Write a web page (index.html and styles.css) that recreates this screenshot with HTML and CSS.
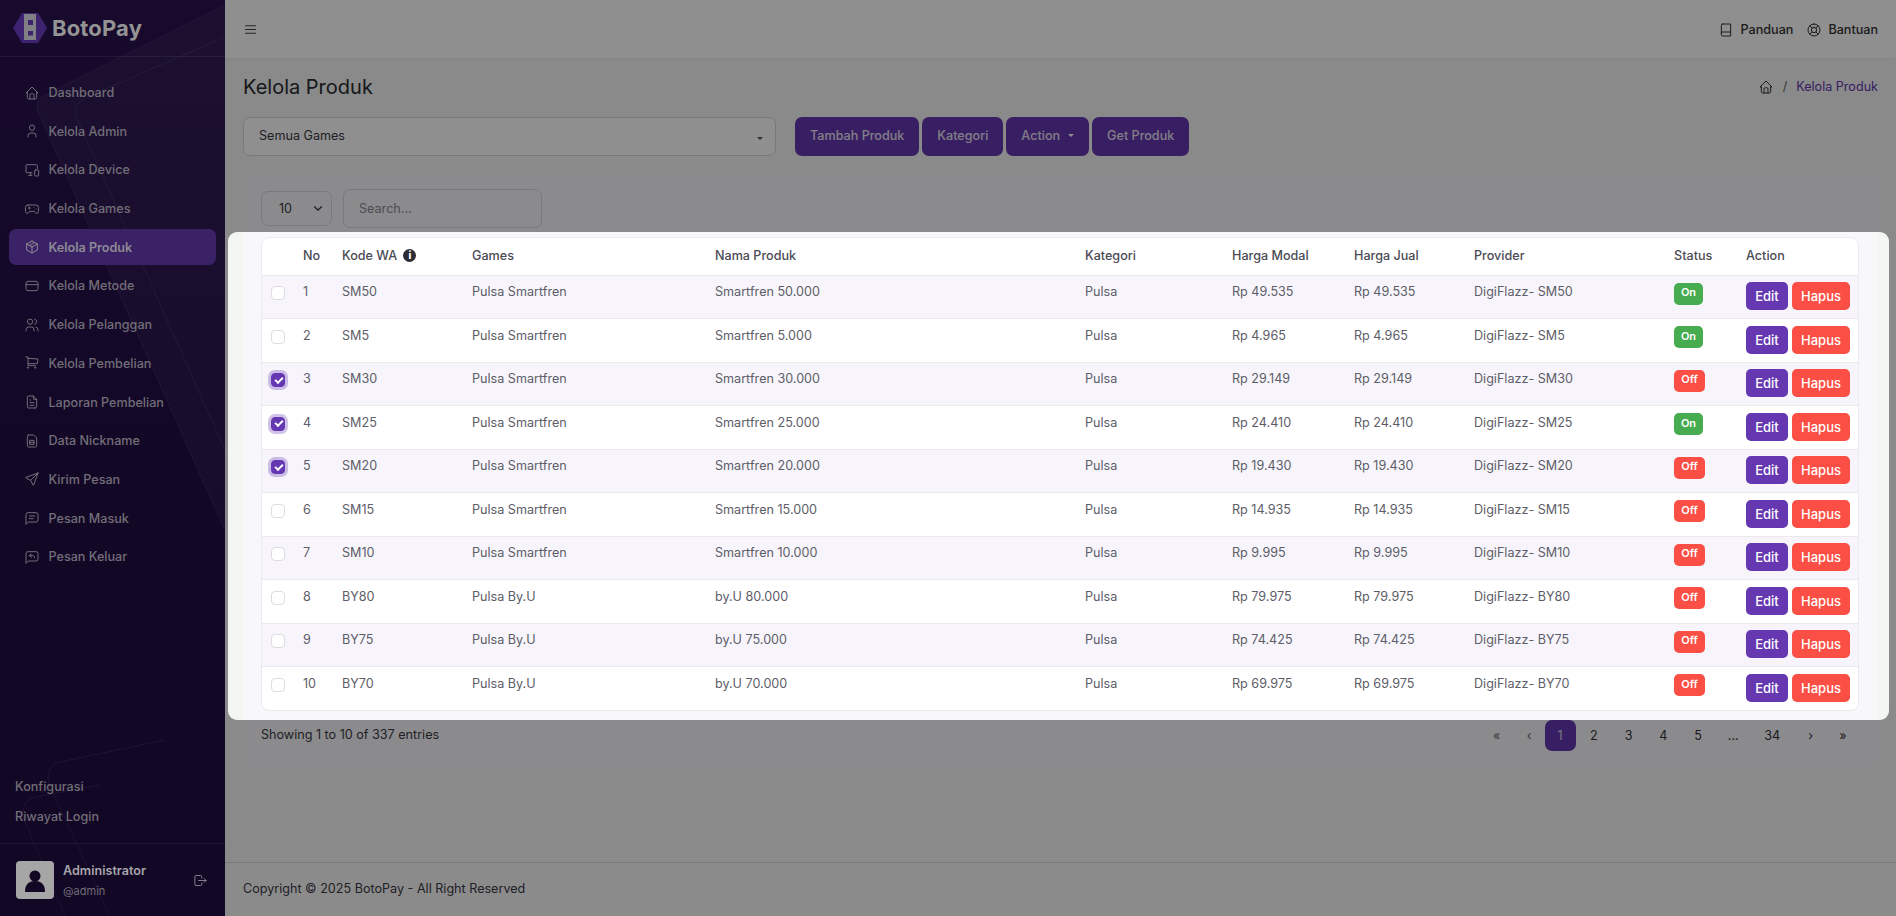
FILE: index.html
```html
<!DOCTYPE html>
<html lang="id">
<head>
<meta charset="utf-8">
<title>Kelola Produk - BotoPay</title>
<link rel="stylesheet" href="styles.css">
</head>
<body>
<svg class="sprite" aria-hidden="true">
<symbol id="i-home" viewBox="0 0 24 24"><path d="M5 12H3l9-9 9 9h-2M5 12v7a2 2 0 0 0 2 2h10a2 2 0 0 0 2-2v-7M9 21v-6a2 2 0 0 1 2-2h2a2 2 0 0 1 2 2v6"/></symbol>
<symbol id="i-user" viewBox="0 0 24 24"><path d="M8 7a4 4 0 1 0 8 0a4 4 0 0 0-8 0M6 21v-2a4 4 0 0 1 4-4h4a4 4 0 0 1 4 4v2"/></symbol>
<symbol id="i-device" viewBox="0 0 24 24"><path d="M12 16H4a1 1 0 0 1-1-1V5a1 1 0 0 1 1-1h15a1 1 0 0 1 1 1v5M7 20h5M10 16v4M17 12h4a1 1 0 0 1 1 1v7a1 1 0 0 1-1 1h-4a1 1 0 0 1-1-1v-7a1 1 0 0 1 1-1z"/></symbol>
<symbol id="i-game" viewBox="0 0 24 24"><path d="M6 6h12a4 4 0 0 1 4 4l-.5 6a2.5 2.5 0 0 1-4.500 1.500L15.500 15.500h-7L7 17.500A2.500 2.500 0 0 1 2.500 16L2 10a4 4 0 0 1 4-4zM8 9v3M6.500 10.500h3M15 10h.01M18 12h.01"/></symbol>
<symbol id="i-box" viewBox="0 0 24 24"><path d="M12 3l8 4.500v9L12 21l-8-4.500v-9L12 3M12 12l8-4.500M12 12v9M12 12L4 7.500M16 5.250l-8 4.500"/></symbol>
<symbol id="i-card" viewBox="0 0 24 24"><path d="M6 5h12a3 3 0 0 1 3 3v8a3 3 0 0 1-3 3H6a3 3 0 0 1-3-3V8a3 3 0 0 1 3-3zM3 10h18"/></symbol>
<symbol id="i-users" viewBox="0 0 24 24"><path d="M5 7a4 4 0 1 0 8 0a4 4 0 0 0-8 0M3 21v-2a4 4 0 0 1 4-4h4a4 4 0 0 1 4 4v2M16 3.130a4 4 0 0 1 0 7.750M21 21v-2a4 4 0 0 0-3-3.850"/></symbol>
<symbol id="i-cart" viewBox="0 0 24 24"><path d="M5 19a1 1 0 1 0 2 0a1 1 0 0 0-2 0M16 19a1 1 0 1 0 2 0a1 1 0 0 0-2 0M17 16H6V3H3M6 5l15 1-1 7H6"/></symbol>
<symbol id="i-file" viewBox="0 0 24 24"><path d="M14 3v4a1 1 0 0 0 1 1h4M17 21H7a2 2 0 0 1-2-2V5a2 2 0 0 1 2-2h7l5 5v11a2 2 0 0 1-2 2zM9 9h1M9 13h6M9 17h6"/></symbol>
<symbol id="i-sim" viewBox="0 0 24 24"><path d="M7 3h7.500L19 7.500V19a2 2 0 0 1-2 2H7a2 2 0 0 1-2-2V5a2 2 0 0 1 2-2zM9 11h6v6H9zM9 14h6"/></symbol>
<symbol id="i-send" viewBox="0 0 24 24"><path d="M10 14L21 3M21 3l-6.500 18a.55.55 0 0 1-1 0L10 14l-7-3.500a.55.55 0 0 1 0-1L21 3"/></symbol>
<symbol id="i-msg" viewBox="0 0 24 24"><path d="M8 9h8M8 13h6M3 21V7a3 3 0 0 1 3-3h12a3 3 0 0 1 3 3v8a3 3 0 0 1-3 3H7z"/></symbol>
<symbol id="i-reply" viewBox="0 0 24 24"><path d="M11 7.500L8 10l3 2.500M8 10h6a3 3 0 0 1 2 3M3 21V7a3 3 0 0 1 3-3h12a3 3 0 0 1 3 3v8a3 3 0 0 1-3 3H7z"/></symbol>
<symbol id="i-logout" viewBox="0 0 24 24"><path d="M14 8V6a2 2 0 0 0-2-2H5a2 2 0 0 0-2 2v12a2 2 0 0 0 2 2h7a2 2 0 0 0 2-2v-2M9 12h12l-3-3M18 15l3-3"/></symbol>
<symbol id="i-menu" viewBox="0 0 24 24"><path d="M4 6h16M4 12h16M4 18h16"/></symbol>
<symbol id="i-book" viewBox="0 0 24 24"><path d="M7 3h12v18H7a2 2 0 0 1-2-2V5a2 2 0 0 1 2-2zM5 17a2 2 0 0 1 2-2h12"/></symbol>
<symbol id="i-help" viewBox="0 0 24 24"><path d="M12 3a9 9 0 1 0 0 18a9 9 0 0 0 0-18zM12 8a4 4 0 1 0 0 8a4 4 0 0 0 0-8zM15 15l3.350 3.350M9 15l-3.350 3.350M5.650 5.650L9 9M18.350 5.650L15 9"/></symbol>
</svg>

<aside class="sidebar">
  <svg class="side-art" viewBox="0 0 225 916" preserveAspectRatio="none" aria-hidden="true">
    <path class="art-fill" d="M225 5L45 95Q34 101 38 112L225 530Z"/>
    <path class="art-line" d="M225 5L45 95Q34 101 38 112L225 530"/>
    <path class="art-line" d="M225 37L85 98Q74 104 76 116L225 450"/>
    <path class="art-line" d="M165 740L55 763Q44 772 50 786L110 916"/>
    <path class="art-line" d="M100 785L30 798Q20 806 24 820L65 916"/>
  </svg>
  <div class="brand">
    <svg class="brand-mark" viewBox="0 0 34 30" aria-hidden="true">
      <path class="hex" d="M9 0h16l9 15-9 15H9L0 15z"/>
      <rect class="hex-in" x="11" y="1" width="12" height="26"/>
      <rect class="hex" x="15" y="7" width="5" height="5"/>
      <rect class="hex" x="15" y="18" width="5" height="4.500"/>
    </svg>
    <span class="brand-name">BotoPay</span>
  </div>
  <nav class="menu">
    <a class="menu-item"><svg class="ico"><use href="#i-home"/></svg>Dashboard</a>
    <a class="menu-item"><svg class="ico"><use href="#i-user"/></svg>Kelola Admin</a>
    <a class="menu-item"><svg class="ico"><use href="#i-device"/></svg>Kelola Device</a>
    <a class="menu-item"><svg class="ico"><use href="#i-game"/></svg>Kelola Games</a>
    <a class="menu-item active"><svg class="ico"><use href="#i-box"/></svg>Kelola Produk</a>
    <a class="menu-item"><svg class="ico"><use href="#i-card"/></svg>Kelola Metode</a>
    <a class="menu-item"><svg class="ico"><use href="#i-users"/></svg>Kelola Pelanggan</a>
    <a class="menu-item"><svg class="ico"><use href="#i-cart"/></svg>Kelola Pembelian</a>
    <a class="menu-item"><svg class="ico"><use href="#i-file"/></svg>Laporan Pembelian</a>
    <a class="menu-item"><svg class="ico"><use href="#i-sim"/></svg>Data Nickname</a>
    <a class="menu-item"><svg class="ico"><use href="#i-send"/></svg>Kirim Pesan</a>
    <a class="menu-item"><svg class="ico"><use href="#i-msg"/></svg>Pesan Masuk</a>
    <a class="menu-item"><svg class="ico"><use href="#i-reply"/></svg>Pesan Keluar</a>
  </nav>
  <div class="side-links">
    <a>Konfigurasi</a>
    <a>Riwayat Login</a>
  </div>
  <div class="profile">
    <div class="avatar">
      <svg viewBox="0 0 38 38" aria-hidden="true"><circle cx="19" cy="15" r="5.500"/><path d="M9 31c0-7 3-11 10-11s10 4 10 11q0 0-1 0H10q-1 0-1 0z"/></svg>
    </div>
    <div class="who">
      <div class="who-name">Administrator</div>
      <div class="who-id">@admin</div>
    </div>
    <svg class="ico logout"><use href="#i-logout"/></svg>
  </div>
</aside>

<div class="main">
  <header class="topbar">
    <svg class="ico menu-btn"><use href="#i-menu"/></svg>
    <div class="top-links">
      <a class="top-link"><svg class="ico"><use href="#i-book"/></svg>Panduan</a>
      <a class="top-link"><svg class="ico"><use href="#i-help"/></svg>Bantuan</a>
    </div>
  </header>

  <main class="content">
    <div class="title-row">
      <h1>Kelola Produk</h1>
      <div class="crumb"><svg class="ico"><use href="#i-home"/></svg><span class="sep">/</span><span class="crumb-now">Kelola Produk</span></div>
    </div>
    <div class="tools">
      <div class="game-select">Semua Games<span class="caret"></span></div>
      <div class="tool-btns">
        <a class="btn">Tambah Produk</a>
        <a class="btn">Kategori</a>
        <a class="btn">Action<span class="caret light"></span></a>
        <a class="btn">Get Produk</a>
      </div>
    </div>

    <section class="card">
      <div class="filters">
        <div class="len-select">10<svg viewBox="0 0 12 8" aria-hidden="true"><path d="M1.500 1.500L6 6l4.500-4.500"/></svg></div>
        <input class="search" type="text" placeholder="Search...">
      </div>
      <div class="table-wrap">
        <table>
          <colgroup>
            <col class="c-check"><col class="c-no"><col class="c-kode"><col class="c-games"><col class="c-nama"><col class="c-kat"><col class="c-modal"><col class="c-jual"><col class="c-prov"><col class="c-stat"><col class="c-act">
          </colgroup>
          <thead>
            <tr><th></th><th>No</th><th>Kode WA <span class="info">i</span></th><th>Games</th><th>Nama Produk</th><th>Kategori</th><th>Harga Modal</th><th>Harga Jual</th><th>Provider</th><th>Status</th><th>Action</th></tr>
          </thead>
          <tbody>
            <tr><td><span class="cb"></span></td><td>1</td><td>SM50</td><td>Pulsa Smartfren</td><td>Smartfren 50.000</td><td>Pulsa</td><td>Rp 49.535</td><td>Rp 49.535</td><td>DigiFlazz- SM50</td><td><span class="badge on">On</span></td><td class="acts"><a class="mini edit">Edit</a><a class="mini del">Hapus</a></td></tr>
            <tr><td><span class="cb"></span></td><td>2</td><td>SM5</td><td>Pulsa Smartfren</td><td>Smartfren 5.000</td><td>Pulsa</td><td>Rp 4.965</td><td>Rp 4.965</td><td>DigiFlazz- SM5</td><td><span class="badge on">On</span></td><td class="acts"><a class="mini edit">Edit</a><a class="mini del">Hapus</a></td></tr>
            <tr><td><span class="cb checked"></span></td><td>3</td><td>SM30</td><td>Pulsa Smartfren</td><td>Smartfren 30.000</td><td>Pulsa</td><td>Rp 29.149</td><td>Rp 29.149</td><td>DigiFlazz- SM30</td><td><span class="badge off">Off</span></td><td class="acts"><a class="mini edit">Edit</a><a class="mini del">Hapus</a></td></tr>
            <tr><td><span class="cb checked"></span></td><td>4</td><td>SM25</td><td>Pulsa Smartfren</td><td>Smartfren 25.000</td><td>Pulsa</td><td>Rp 24.410</td><td>Rp 24.410</td><td>DigiFlazz- SM25</td><td><span class="badge on">On</span></td><td class="acts"><a class="mini edit">Edit</a><a class="mini del">Hapus</a></td></tr>
            <tr><td><span class="cb checked"></span></td><td>5</td><td>SM20</td><td>Pulsa Smartfren</td><td>Smartfren 20.000</td><td>Pulsa</td><td>Rp 19.430</td><td>Rp 19.430</td><td>DigiFlazz- SM20</td><td><span class="badge off">Off</span></td><td class="acts"><a class="mini edit">Edit</a><a class="mini del">Hapus</a></td></tr>
            <tr><td><span class="cb"></span></td><td>6</td><td>SM15</td><td>Pulsa Smartfren</td><td>Smartfren 15.000</td><td>Pulsa</td><td>Rp 14.935</td><td>Rp 14.935</td><td>DigiFlazz- SM15</td><td><span class="badge off">Off</span></td><td class="acts"><a class="mini edit">Edit</a><a class="mini del">Hapus</a></td></tr>
            <tr><td><span class="cb"></span></td><td>7</td><td>SM10</td><td>Pulsa Smartfren</td><td>Smartfren 10.000</td><td>Pulsa</td><td>Rp 9.995</td><td>Rp 9.995</td><td>DigiFlazz- SM10</td><td><span class="badge off">Off</span></td><td class="acts"><a class="mini edit">Edit</a><a class="mini del">Hapus</a></td></tr>
            <tr><td><span class="cb"></span></td><td>8</td><td>BY80</td><td>Pulsa By.U</td><td>by.U 80.000</td><td>Pulsa</td><td>Rp 79.975</td><td>Rp 79.975</td><td>DigiFlazz- BY80</td><td><span class="badge off">Off</span></td><td class="acts"><a class="mini edit">Edit</a><a class="mini del">Hapus</a></td></tr>
            <tr><td><span class="cb"></span></td><td>9</td><td>BY75</td><td>Pulsa By.U</td><td>by.U 75.000</td><td>Pulsa</td><td>Rp 74.425</td><td>Rp 74.425</td><td>DigiFlazz- BY75</td><td><span class="badge off">Off</span></td><td class="acts"><a class="mini edit">Edit</a><a class="mini del">Hapus</a></td></tr>
            <tr><td><span class="cb"></span></td><td>10</td><td>BY70</td><td>Pulsa By.U</td><td>by.U 70.000</td><td>Pulsa</td><td>Rp 69.975</td><td>Rp 69.975</td><td>DigiFlazz- BY70</td><td><span class="badge off">Off</span></td><td class="acts"><a class="mini edit">Edit</a><a class="mini del">Hapus</a></td></tr>
          </tbody>
        </table>
      </div>
      <div class="table-foot">
        <div class="showing">Showing 1 to 10 of 337 entries</div>
        <div class="pager">
          <a class="pg muted first">«</a><a class="pg muted prev">‹</a><a class="pg current">1</a><a class="pg">2</a><a class="pg">3</a><a class="pg">4</a><a class="pg">5</a><a class="pg dots">...</a><a class="pg wide">34</a><a class="pg">›</a><a class="pg last">»</a>
        </div>
      </div>
    </section>
  </main>

  <footer class="footer">Copyright © 2025 BotoPay - All Right Reserved</footer>
</div>

<div class="spotlight"></div>
</body>
</html>
```

FILE: styles.css
```css
* { box-sizing: border-box; }
html, body { margin: 0; height: 100%; }
body {
  display: flex;
  height: 916px;
  overflow: hidden;
  font-family: Inter, "Liberation Sans", sans-serif;
  font-size: 12.6px;
  color: #3a3a44;
  background: #f4f6f4;
}
a { color: inherit; text-decoration: none; }
.sprite { display: none; }
.ico {
  width: 16px;
  height: 16px;
  flex: none;
  fill: none;
  stroke: currentColor;
  stroke-width: 1.5;
  stroke-linecap: round;
  stroke-linejoin: round;
}

/* Sidebar: sits over the tour dim, so its colours are the dimmed ones */
.sidebar {
  position: relative;
  z-index: 2;
  flex: 0 0 225px;
  display: flex;
  flex-direction: column;
  background: linear-gradient(180deg, #170a2c 0%, #130726 55%, #130726 100%);
  color: #716e78;
  overflow: hidden;
}
.side-art { position: absolute; inset: 0; width: 225px; height: 916px; }
.art-fill { fill: rgba(255,255,255,.025); }
.art-line { fill: none; stroke: rgba(255,255,255,.05); stroke-width: 1; }
.brand {
  position: relative;
  height: 57px;
  display: flex;
  align-items: center;
  gap: 5px;
  padding-left: 13px;
  border-bottom: 1px solid rgba(255,255,255,.06);
}
.brand-mark { width: 34px; height: 30px; margin-top: -1px; }
.hex { fill: #3d2270; }
.hex-in { fill: #7f7f84; }
.brand-name { font-size: 22px; font-weight: 700; color: #949494; letter-spacing: .15px; margin-top: -1px; }
.menu { position: relative; padding: 17.500px 9px 0; flex: 1; }
.menu-item {
  display: flex;
  align-items: center;
  gap: 8.500px;
  height: 36px;
  margin-bottom: 2.700px;
  padding-left: 15px;
  border-radius: 7px;
  font-weight: 500;
}
.menu-item.active { background: #3b2266; color: #8d8a95; font-weight: 600; }
.side-links { position: relative; display: flex; flex-direction: column; gap: 12px; padding: 0 15px 17px; font-weight: 500; }
.side-links a { line-height: 18px; }
.profile {
  position: relative;
  height: 73px;
  display: flex;
  align-items: center;
  padding: 0 16px;
  border-top: 1px solid rgba(255,255,255,.06);
}
.avatar { width: 38px; height: 38px; border-radius: 4px; background: #a6a6a6; }
.avatar svg { display: block; width: 38px; height: 38px; fill: #130726; }
.who { margin-left: 9px; flex: 1; }
.who-name { font-weight: 600; font-size: 12.600px; color: #a5a5a8; line-height: 20px; }
.who-id { font-size: 11px; margin-top: 2px; line-height: 16px; }
.logout { width: 15px; height: 15px; margin-right: 1px; color: #8c8a92; }

/* Main */
.main { flex: 1; display: flex; flex-direction: column; min-width: 0; }
.topbar {
  height: 58px;
  flex: none;
  display: flex;
  align-items: center;
  justify-content: space-between;
  padding: 0 18px;
  background: #ffffff;
  box-shadow: 0 1px 3px rgba(0,0,0,.04);
}
.menu-btn { width: 15px; height: 15px; color: #333; margin-top: 1px; }
.top-links { display: flex; gap: 13px; }
.top-link { display: flex; align-items: center; gap: 7px; font-weight: 500; color: #333; }
.top-link:last-child { gap: 6px; }
.top-link .ico { width: 16px; height: 16px; margin-top: 2px; }
.content { flex: 1; padding: 0 18px; }
.title-row { display: flex; justify-content: space-between; align-items: center; height: 57px; margin-bottom: 2px; }
h1 { margin: 0; font-size: 20px; line-height: 28px; font-weight: 400; color: #2b2b33; }
.crumb { display: flex; align-items: center; }
.crumb .ico { color: #333; }
.sep { margin: 0 9px; color: #666; }
.crumb-now { color: #6537b0; }
.tools { display: flex; align-items: center; gap: 19px; height: 39px; }
.game-select {
  position: relative;
  width: 533px;
  height: 39px;
  display: flex;
  align-items: center;
  padding: 0 0 2px 15px;
  border: 1px solid #d8d8d8;
  border-radius: 7px;
  background: #fff;
}
.caret {
  display: inline-block;
  width: 0;
  height: 0;
  border-left: 3px solid transparent;
  border-right: 3px solid transparent;
  border-top: 3px solid #555;
}
.game-select .caret { position: absolute; right: 12px; top: 19px; }
.caret.light { border-top-color: #fff; margin-left: 8px; }
.tool-btns { display: flex; gap: 3px; }
.btn {
  height: 39px;
  display: flex;
  align-items: center;
  padding: 0 15px 2px;
  background: #6537b0;
  color: #e6e0f2;
  border-radius: 7px;
  font-weight: 500;
}

.card {
  margin-top: 15px;
  height: 598px;
  padding: 18px 18px 0;
  background: #f8f8fb;
  border-radius: 8px;
}
.filters { display: flex; align-items: center; gap: 11px; height: 39px; margin-bottom: 9px; }
.len-select {
  position: relative;
  width: 71px;
  height: 35px;
  display: flex;
  align-items: center;
  padding-left: 17px;
  border: 1px solid #d8d8d8;
  border-radius: 7px;
}
.len-select svg { position: absolute; right: 8px; top: 13px; width: 10px; height: 7px; fill: none; stroke: #333; stroke-width: 1.6; }
.search {
  width: 199px;
  height: 39px;
  padding: 0 15px;
  border: 1px solid #d8d8d8;
  border-radius: 7px;
  background: transparent;
  font: inherit;
}
.search::placeholder { color: #8a8a94; }
.table-wrap {
  width: 1598px;
  background: #fff;
  border: 1px solid #ebebef;
  border-radius: 8px;
  overflow: hidden;
}
table { width: 100%; border-collapse: collapse; table-layout: fixed; }
.c-check { width: 33px; } .c-no { width: 39px; } .c-kode { width: 130px; } .c-games { width: 243px; }
.c-nama { width: 370px; } .c-kat { width: 147px; } .c-modal { width: 122px; } .c-jual { width: 120px; }
.c-prov { width: 200px; } .c-stat { width: 72px; } .c-act { width: 121px; }
th {
  height: 37px;
  padding: 0 8px 1px;
  text-align: left;
  font-weight: 500;
  color: #4b4b55;
}
td {
  height: 43.500px;
  padding: 6.500px 8px 0;
  vertical-align: top;
  line-height: 20px;
  color: #5d5d68;
  border-top: 1px solid #e9e9ee;
  white-space: nowrap;
}
tbody tr:nth-child(odd) td { background: #f7f5fb; }
.info {
  display: inline-flex;
  align-items: center;
  justify-content: center;
  width: 13px;
  height: 13px;
  margin-left: 3px;
  border-radius: 50%;
  background: #2c2c34;
  color: #fff;
  font-size: 10px;
  font-weight: 800;
  vertical-align: 1px;
}
.cb {
  display: block;
  width: 14px;
  height: 14px;
  margin: 4px 0 0 1px;
  background: #fff;
  border: 1px solid #dcdce2;
  border-radius: 4px;
}
.cb.checked {
  position: relative;
  background: #6537b0;
  border-color: #6537b0;
  box-shadow: 0 0 0 3px rgba(101,55,176,.3);
}
.cb.checked::after {
  content: "";
  position: absolute;
  left: 3px;
  top: 2.500px;
  width: 6px;
  height: 3px;
  border-left: 2px solid #fff;
  border-bottom: 2px solid #fff;
  transform: rotate(-45deg);
}
.badge {
  display: inline-flex;
  align-items: center;
  justify-content: center;
  height: 22px;
  border-radius: 5px;
  color: #fff;
  font-size: 11px;
  font-weight: 600;
  padding-bottom: 3px;
}
.badge.on { width: 29px; background: #47ab4f; }
.badge.off { width: 31px; background: #fb4f45; }
.acts { padding-right: 0; }
.mini {
  display: inline-flex;
  align-items: center;
  justify-content: center;
  height: 28px;
  border-radius: 5px;
  color: #fff;
  font-size: 13px;
  font-weight: 500;
}
.mini.edit { width: 42px; background: #6537b0; margin-right: 4px; }
.mini.del { width: 58px; background: #fb4f45; }

.table-foot { display: flex; justify-content: space-between; align-items: flex-start; padding-top: 11px; }
.showing { line-height: 20px; margin-top: 3px; }
.pager { display: flex; align-items: center; margin-right: 2px; margin-top: -2px; }
.pg {
  width: 34.700px;
  height: 31px;
  display: flex;
  align-items: center;
  justify-content: center;
  color: #33333a;
}
.pg.muted { color: #666; }
.pg.first { width: 36px; }
.pg.prev { width: 29px; }
.pg.current { width: 31px; margin: 0 1px; background: #6537b0; color: #d8d0ea; border-radius: 7px; }
.pg.dots { width: 36px; }
.pg.wide { width: 42px; }
.pg.last { width: 30px; }
.footer {
  height: 54px;
  flex: none;
  display: flex;
  align-items: center;
  padding: 0 0 2px 18px;
  border-top: 1px solid #dcdcdc;
  background: #f8f8fa;
}

/* Tour highlight over the table, dims all the rest of the page */
.spotlight {
  position: absolute;
  left: 228px;
  top: 232px;
  width: 1661px;
  height: 488px;
  border-radius: 9px;
  box-shadow: 0 0 0 3000px rgba(0,0,0,.44);
  pointer-events: none;
}
```
